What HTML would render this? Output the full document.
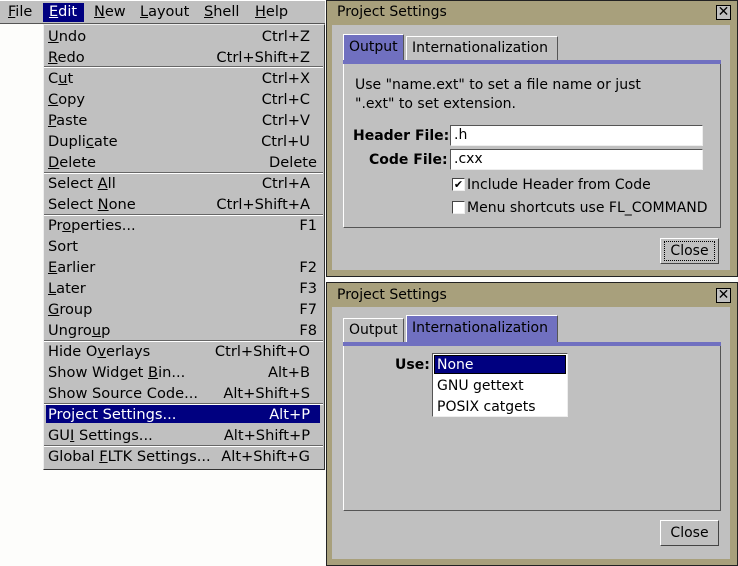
<!DOCTYPE html>
<html><head><style>
*{margin:0;padding:0;box-sizing:border-box}
body{width:738px;height:566px;background:#fdfdfb;position:relative;overflow:hidden;font-family:"DejaVu Sans","Liberation Sans",sans-serif;font-size:14px;color:#000}
.a{position:absolute;white-space:nowrap}
.bar{left:0;top:0;width:325px;height:24px;background:#c0c0c0;border-bottom:1px solid #555;border-top:1px solid #fff}
.mi{top:3px;height:19px;line-height:19px;font-size:14.5px}
.menu{left:43px;top:24px;width:282px;height:446px;background:#c0c0c0;border:1px solid #333;border-top-color:#eee;border-left-color:#eee}
.it{left:48px;height:21px;line-height:23px;font-size:14.6px}
.sc{height:21px;line-height:23px;text-align:right;font-size:14.6px}
.sep{left:44px;width:279px;height:2px;border-top:1px solid #666;border-bottom:1px solid #fff}
u{text-decoration:underline}
.win{left:326px;width:412px;background:#a8a07c;border:1px solid #222}
.in{background:#c0c0c0}
.title{left:337px;height:24px;line-height:25px}
.xb{width:15px;height:15px;border:1px solid #000;background:#c0c0c0;font-size:14px;line-height:12px;text-align:center}
.tab{height:27px;line-height:24px;padding-left:5px;border:1px solid #fff;border-right-color:#555;border-bottom:none;background:#c0c0c0}
.band{left:343px;width:378px;height:4px;background:#7070c0}
.panel{left:343px;width:378px;border:1px solid #555;border-top:none;border-left-color:#fff;background:#c0c0c0}
.inp{background:#fff;border:1px solid #555;border-right-color:#eee;border-bottom-color:#eee;height:21px;line-height:19px;padding-left:3px}
.cb{width:13px;height:13px;background:#fff;border:1px solid #444;border-right-color:#eee;border-bottom-color:#eee}
.btn{width:59px;height:26px;border:1px solid #fff;border-right-color:#444;border-bottom-color:#444;background:#c0c0c0;text-align:center;line-height:25px}
</style></head><body>
<div class="a bar"></div>
<div class="a mi" style="left:8px"><u>F</u>ile</div>
<div class="a mi" style="left:43px;width:41px;background:#000080;color:#fff;padding-left:6px"><u>E</u>dit</div>
<div class="a mi" style="left:94px"><u>N</u>ew</div>
<div class="a mi" style="left:140px"><u>L</u>ayout</div>
<div class="a mi" style="left:204px"><u>S</u>hell</div>
<div class="a mi" style="left:255px"><u>H</u>elp</div>

<div class="a menu"></div>
<div class="a" style="left:46px;top:404px;width:274px;height:19px;background:#000080"></div>
<div class="a sep" style="top:66px"></div>
<div class="a sep" style="top:172px"></div>
<div class="a sep" style="top:214px"></div>
<div class="a sep" style="top:340px"></div>
<div class="a sep" style="top:403px"></div>
<div class="a sep" style="top:445px"></div>

<div class="a it" style="top:25px"><u>U</u>ndo</div><div class="a sc" style="top:25px;right:428px">Ctrl+Z</div>
<div class="a it" style="top:46px"><u>R</u>edo</div><div class="a sc" style="top:46px;right:428px">Ctrl+Shift+Z</div>
<div class="a it" style="top:67px">C<u>u</u>t</div><div class="a sc" style="top:67px;right:428px">Ctrl+X</div>
<div class="a it" style="top:88px"><u>C</u>opy</div><div class="a sc" style="top:88px;right:428px">Ctrl+C</div>
<div class="a it" style="top:109px"><u>P</u>aste</div><div class="a sc" style="top:109px;right:428px">Ctrl+V</div>
<div class="a it" style="top:130px">Dupli<u>c</u>ate</div><div class="a sc" style="top:130px;right:428px">Ctrl+U</div>
<div class="a it" style="top:151px"><u>D</u>elete</div><div class="a sc" style="top:151px;right:421px">Delete</div>
<div class="a it" style="top:172px">Select <u>A</u>ll</div><div class="a sc" style="top:172px;right:428px">Ctrl+A</div>
<div class="a it" style="top:193px">Select <u>N</u>one</div><div class="a sc" style="top:193px;right:428px">Ctrl+Shift+A</div>
<div class="a it" style="top:214px">Pr<u>o</u>perties...</div><div class="a sc" style="top:214px;right:421px">F1</div>
<div class="a it" style="top:235px">Sort</div>
<div class="a it" style="top:256px"><u>E</u>arlier</div><div class="a sc" style="top:256px;right:421px">F2</div>
<div class="a it" style="top:277px"><u>L</u>ater</div><div class="a sc" style="top:277px;right:421px">F3</div>
<div class="a it" style="top:298px"><u>G</u>roup</div><div class="a sc" style="top:298px;right:421px">F7</div>
<div class="a it" style="top:319px">Ungro<u>u</u>p</div><div class="a sc" style="top:319px;right:421px">F8</div>
<div class="a it" style="top:340px">Hide O<u>v</u>erlays</div><div class="a sc" style="top:340px;right:428px">Ctrl+Shift+O</div>
<div class="a it" style="top:361px">Show Widget <u>B</u>in...</div><div class="a sc" style="top:361px;right:428px">Alt+B</div>
<div class="a it" style="top:382px">Show Source Code...</div><div class="a sc" style="top:382px;right:428px">Alt+Shift+S</div>
<div class="a it" style="top:403px;color:#fff">Pro<u>j</u>ect Settings...</div><div class="a sc" style="top:403px;right:428px;color:#fff">Alt+P</div>
<div class="a it" style="top:424px">GU<u>I</u> Settings...</div><div class="a sc" style="top:424px;right:428px">Alt+Shift+P</div>
<div class="a it" style="top:445px">Global <u>F</u>LTK Settings...</div><div class="a sc" style="top:445px;right:428px">Alt+Shift+G</div>

<!-- window 1 -->
<div class="a win" style="top:0;height:277px"></div>
<div class="a in" style="left:332px;top:25px;width:398px;height:245px"></div>
<div class="a title" style="top:0">Project Settings</div>
<div class="a xb" style="left:716px;top:5px">✕</div>
<div class="a tab" style="left:343px;top:34px;width:61px;background:#7070c0">Output</div>
<div class="a tab" style="left:406px;top:36px;width:152px;height:24px;line-height:22px">Internationalization</div>
<div class="a band" style="top:60px"></div>
<div class="a panel" style="top:64px;height:164px"></div>
<div class="a" style="left:355px;top:76px;line-height:19px">Use "name.ext" to set a file name or just<br>".ext" to set extension.</div>
<div class="a" style="left:353px;top:126px;font-weight:bold;line-height:20px">Header File:</div>
<div class="a inp" style="left:450px;top:125px;width:253px">.h</div>
<div class="a" style="left:369px;top:150px;font-weight:bold;line-height:20px">Code File:</div>
<div class="a inp" style="left:450px;top:149px;width:253px">.cxx</div>
<div class="a cb" style="left:452px;top:178px;font-size:11px;line-height:11px;text-align:center">✔</div>
<div class="a" style="left:467px;top:175px;line-height:20px">Include Header from Code</div>
<div class="a cb" style="left:452px;top:201px"></div>
<div class="a" style="left:467px;top:198px;line-height:20px">Menu shortcuts use FL_COMMAND</div>
<div class="a btn" style="left:660px;top:238px"><span style="border:1px dotted #000;padding:1px 5px">Close</span></div>

<!-- window 2 -->
<div class="a win" style="top:282px;height:284px"></div>
<div class="a in" style="left:332px;top:307px;width:398px;height:252px"></div>
<div class="a title" style="top:283px">Project Settings</div>
<div class="a xb" style="left:716px;top:288px">✕</div>
<div class="a tab" style="left:343px;top:318px;width:61px;height:24px;line-height:22px">Output</div>
<div class="a tab" style="left:406px;top:315px;width:152px;background:#7070c0">Internationalization</div>
<div class="a band" style="top:342px"></div>
<div class="a panel" style="top:346px;height:165px"></div>
<div class="a" style="left:395px;top:355px;font-weight:bold;line-height:20px">Use:</div>
<div class="a" style="left:432px;top:353px;width:136px;height:64px;background:#fff;border:1px solid #555;border-right-color:#eee;border-bottom-color:#eee"></div>
<div class="a" style="left:434px;top:355px;width:132px;height:19px;background:#000080;border:1px solid #000"></div>
<div class="a" style="left:437px;top:355px;line-height:20px;color:#fff">None</div>
<div class="a" style="left:437px;top:376px;line-height:20px">GNU gettext</div>
<div class="a" style="left:437px;top:397px;line-height:20px">POSIX catgets</div>
<div class="a btn" style="left:660px;top:520px">Close</div>
</body></html>
